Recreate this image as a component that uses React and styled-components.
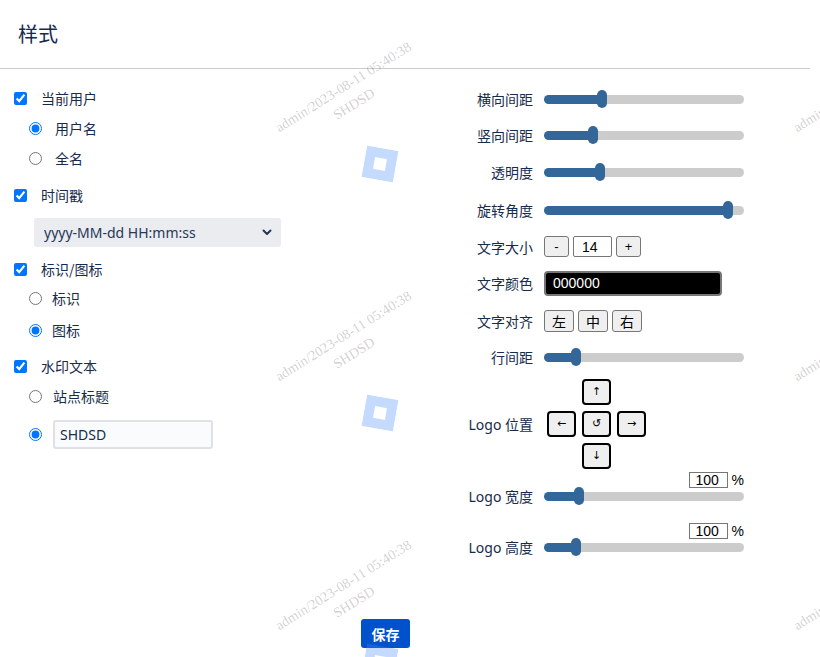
import React from 'react';
import styled, { createGlobalStyle } from 'styled-components';

const GlobalStyle = createGlobalStyle`
  html, body { margin: 0; padding: 0; background: #ffffff; }
  body {
    font-family: "Noto Sans", "Noto Sans CJK SC", sans-serif;
    color: #172b4d;
  }
  * { box-sizing: border-box; }
`;

const Page = styled.div`
  position: relative;
  width: 820px;
  height: 657px;
  overflow: hidden;
`;

const Header = styled.header`
  width: 810px;
  height: 69px;
  border-bottom: 1px solid #cccccc;
  display: flex;
  align-items: center;
  padding-left: 18px;
`;

const Title = styled.h1`
  margin: 0;
  font-family: "Noto Sans CJK SC", sans-serif;
  font-weight: 400;
  font-size: 20px;
  line-height: 1;
  color: #172b4d;
`;

const Body = styled.div`
  display: flex;
  padding: 12px 0 0 14px;
`;

const LeftCol = styled.div`
  width: 429px;
  display: flex;
  flex-direction: column;
`;

const RightCol = styled.div`
  display: flex;
  flex-direction: column;
`;

const Row = styled.label`
  display: flex;
  align-items: center;
  height: ${p => p.$h || 20}px;
  margin-top: ${p => p.$mt || 0}px;
  padding-left: ${p => p.$indent || 0}px;
  gap: ${p => p.$gap || 0}px;
  font-family: "Noto Sans CJK SC", sans-serif;
  font-size: 14px;
  color: #172b4d;
`;

const Check = styled.input.attrs({ type: 'checkbox' })`
  margin: 0;
  width: 13px;
  height: 13px;
  accent-color: #0075ff;
`;

const Radio = styled.input.attrs({ type: 'radio' })`
  margin: 0;
  width: 13px;
  height: 13px;
  accent-color: #0075ff;
`;

const SelectWrap = styled.div`
  position: relative;
  margin: 13px 0 0 20px;
  width: 247px;
  height: 29px;
`;

const Select = styled.select`
  appearance: none;
  -webkit-appearance: none;
  width: 100%;
  height: 100%;
  border: none;
  border-radius: 3px;
  background: #ebecf0;
  padding: 0 10px;
  font-family: "Noto Sans", sans-serif;
  font-size: 14px;
  color: #253858;
  outline: none;
`;

const Chevron = styled.svg`
  position: absolute;
  right: 9px;
  top: 11px;
  pointer-events: none;
`;

const TextInput = styled.input`
  width: 160px;
  height: 29px;
  border: 2px solid #dfe1e6;
  border-radius: 3px;
  background: #fafbfc;
  padding: 0 5px;
  font-family: "Noto Sans", sans-serif;
  font-size: 14px;
  color: #172b4d;
  outline: none;
`;

const RRow = styled.div`
  display: flex;
  align-items: center;
  height: ${p => p.$h}px;
`;

const RLabel = styled.div`
  width: 90px;
  flex-shrink: 0;
  margin-right: 11px;
  text-align: right;
  font-family: "Noto Sans", "Noto Sans CJK SC", sans-serif;
  font-size: 14px;
  color: #172b4d;
  white-space: nowrap;
`;

const Range = styled.input.attrs({ type: 'range', min: 0, max: 100 })`
  -webkit-appearance: none;
  appearance: none;
  width: 200px;
  height: 18px;
  margin: 0;
  padding: 0;
  background: transparent;
  &::-webkit-slider-runnable-track {
    height: 9px;
    border-radius: 5px;
    background: linear-gradient(to right, #336699 0, #336699 var(--fill), #cccccc var(--fill), #cccccc 100%);
  }
  &::-webkit-slider-thumb {
    -webkit-appearance: none;
    width: 10px;
    height: 18px;
    border: none;
    border-radius: 5px;
    background: #336699;
    margin-top: -4.5px;
  }
`;

const Inline = styled.div`
  display: flex;
  align-items: center;
  gap: ${p => p.$gap || 4}px;
`;

const PlainBtn = styled.button`
  width: ${p => p.$w}px;
  height: ${p => p.$hh}px;
  padding: 0;
  background: #efefef;
  border: 1px solid #767676;
  border-radius: 3px;
  font-family: "Liberation Sans", "Noto Sans CJK SC", sans-serif;
  font-size: ${p => p.$fs || 13}px;
  color: #000;
`;

const NumBox = styled.input`
  width: 39px;
  height: 21px;
  border: 1px solid #767676;
  border-radius: 2px;
  padding: 0 0 0 8px;
  font-family: "Liberation Sans", sans-serif;
  font-size: 14px;
  color: #000;
  background: #fff;
`;

const ColorBox = styled.input`
  width: 178px;
  height: 25px;
  background: #000;
  color: #fff;
  border: 2px solid #767676;
  border-radius: 4px;
  padding: 0 0 0 7px;
  font-family: "Liberation Sans", sans-serif;
  font-size: 14px;
  outline: none;
`;

const ArrowGrid = styled.div`
  display: grid;
  grid-template-columns: repeat(3, 29px);
  grid-template-rows: repeat(3, 26px);
  gap: 6px;
  margin-left: 3px;
`;

const ArrowBtn = styled.button`
  grid-column: ${p => p.$c};
  grid-row: ${p => p.$r};
  padding: 0;
  background: #efefef;
  border: 2px solid #000;
  border-radius: 4px;
  font-family: "DejaVu Sans", sans-serif;
  font-size: 11px;
  color: #000;
`;

const Group = styled.div`
  display: grid;
  grid-template-columns: 90px 200px;
  grid-template-rows: 14px 18px;
  column-gap: 11px;
  margin-top: ${p => p.$mt || 0}px;
  & > ${RLabel} {
    grid-column: 1;
    grid-row: 2;
    align-self: center;
    margin-right: 0;
  }
`;

const PctLine = styled.div`
  grid-column: 2;
  grid-row: 1;
  display: flex;
  justify-content: flex-end;
  align-items: center;
  gap: 4px;
  font-family: "Liberation Sans", sans-serif;
  font-size: 14px;
  color: #000;
`;

const PctInput = styled.input`
  width: 39px;
  height: 16px;
  border: 1px solid #767676;
  padding: 0 0 0 6px;
  font-family: "Liberation Sans", sans-serif;
  font-size: 14px;
  color: #000;
`;

const GroupSlider = styled.div`
  grid-column: 2;
  grid-row: 2;
  display: flex;
  align-items: center;
`;

const Footer = styled.div`
  width: 771px;
  display: flex;
  justify-content: center;
  margin-top: 63px;
`;

const SaveBtn = styled.button`
  width: 49px;
  height: 29px;
  border: none;
  border-radius: 3px;
  background: #0052cc;
  color: #fff;
  font-family: "Noto Sans CJK SC", sans-serif;
  font-weight: 700;
  font-size: 14px;
  padding: 0;
`;

const Overlay = styled.div`
  position: absolute;
  inset: 0;
  pointer-events: none;
  display: grid;
  grid-template-columns: repeat(2, 518px);
  grid-auto-rows: 249px;
  overflow: hidden;
`;

const Tile = styled.div`
  position: relative;
`;

const WmText = styled.div`
  position: absolute;
  left: 249px;
  top: 76px;
  width: 200px;
  line-height: 20px;
  text-align: center;
  white-space: nowrap;
  font-family: "Liberation Serif", serif;
  font-size: 14px;
  color: rgba(0, 0, 0, 0.2);
  transform: rotate(-32deg);
`;

const WmIcon = styled.svg`
  position: absolute;
  left: 364px;
  top: 148px;
  transform: rotate(10deg);
  opacity: 0.3;
`;

const Slider = ({ c }) => {
  const v = ((c - 549) / 190) * 100;
  const fill = ((c - 544) / 200) * 100;
  return <Range defaultValue={v} style={{ '--fill': fill + '%' }} />;
};

const Watermark = () => (
  <Overlay>
    {Array.from({ length: 6 }).map((_, i) => (
      <Tile key={i}>
        <WmText>
          admin/2023-08-11 05:40:38
          <br />
          SHDSD
        </WmText>
        <WmIcon width="32" height="32" viewBox="0 0 32 32">
          <path fillRule="evenodd" fill="#408cff" d="M0 0H32V32H0Z M10 10V22H22V10Z" />
        </WmIcon>
      </Tile>
    ))}
  </Overlay>
);

export default function App() {
  return (
    <Page>
      <GlobalStyle />
      <Header>
        <Title>样式</Title>
      </Header>
      <Body>
        <LeftCol>
          <Row $mt={7} $gap={14}><Check defaultChecked />当前用户</Row>
          <Row $mt={10} $indent={15} $gap={13}><Radio name="u" defaultChecked />用户名</Row>
          <Row $mt={10} $indent={15} $gap={13}><Radio name="u" />全名</Row>
          <Row $mt={17} $gap={14}><Check defaultChecked />时间戳</Row>
          <SelectWrap>
            <Select defaultValue="a">
              <option value="a">yyyy-MM-dd HH:mm:ss</option>
            </Select>
            <Chevron width="10" height="7" viewBox="0 0 10 7">
              <path d="M1.5 1.5L5 5L8.5 1.5" fill="none" stroke="#253858" strokeWidth="2" strokeLinecap="round" strokeLinejoin="round" />
            </Chevron>
          </SelectWrap>
          <Row $mt={12} $gap={14}><Check defaultChecked />标识/图标</Row>
          <Row $mt={9} $indent={15} $gap={10}><Radio name="l" />标识</Row>
          <Row $mt={12} $indent={15} $gap={10}><Radio name="l" defaultChecked />图标</Row>
          <Row $mt={16} $gap={14}><Check defaultChecked />水印文本</Row>
          <Row $mt={10} $indent={15} $gap={11}><Radio name="t" />站点标题</Row>
          <Row $mt={14} $h={29} $indent={15} $gap={11}>
            <Radio name="t" defaultChecked />
            <TextInput defaultValue="SHDSD" />
          </Row>
        </LeftCol>
        <RightCol>
          <RRow $h={36}><RLabel>横向间距</RLabel><Slider c={602} /></RRow>
          <RRow $h={36}><RLabel>竖向间距</RLabel><Slider c={593} /></RRow>
          <RRow $h={38}><RLabel>透明度</RLabel><Slider c={600} /></RRow>
          <RRow $h={38}><RLabel>旋转角度</RLabel><Slider c={727} /></RRow>
          <RRow $h={35}>
            <RLabel>文字大小</RLabel>
            <Inline $gap={4}>
              <PlainBtn $w={25} $hh={21}>-</PlainBtn>
              <NumBox defaultValue="14" />
              <PlainBtn $w={25} $hh={21}>+</PlainBtn>
            </Inline>
          </RRow>
          <RRow $h={38}>
            <RLabel>文字颜色</RLabel>
            <ColorBox defaultValue="000000" />
          </RRow>
          <RRow $h={38}>
            <RLabel>文字对齐</RLabel>
            <Inline $gap={4}>
              <PlainBtn $w={30} $hh={22} $fs={14}>左</PlainBtn>
              <PlainBtn $w={30} $hh={22} $fs={14}>中</PlainBtn>
              <PlainBtn $w={30} $hh={22} $fs={14}>右</PlainBtn>
            </Inline>
          </RRow>
          <RRow $h={34}><RLabel>行间距</RLabel><Slider c={576} /></RRow>
          <RRow $h={99}>
            <RLabel>Logo 位置</RLabel>
            <ArrowGrid>
              <ArrowBtn $c={2} $r={1}>↑</ArrowBtn>
              <ArrowBtn $c={1} $r={2}>←</ArrowBtn>
              <ArrowBtn $c={2} $r={2}>↺</ArrowBtn>
              <ArrowBtn $c={3} $r={2}>→</ArrowBtn>
              <ArrowBtn $c={2} $r={3}>↓</ArrowBtn>
            </ArrowGrid>
          </RRow>
          <Group>
            <PctLine><PctInput defaultValue="100" />%</PctLine>
            <RLabel>Logo 宽度</RLabel>
            <GroupSlider><Slider c={579} /></GroupSlider>
          </Group>
          <Group $mt={19}>
            <PctLine><PctInput defaultValue="100" />%</PctLine>
            <RLabel>Logo 高度</RLabel>
            <GroupSlider><Slider c={576} /></GroupSlider>
          </Group>
        </RightCol>
      </Body>
      <Footer>
        <SaveBtn>保存</SaveBtn>
      </Footer>
      <Watermark />
    </Page>
  );
}
